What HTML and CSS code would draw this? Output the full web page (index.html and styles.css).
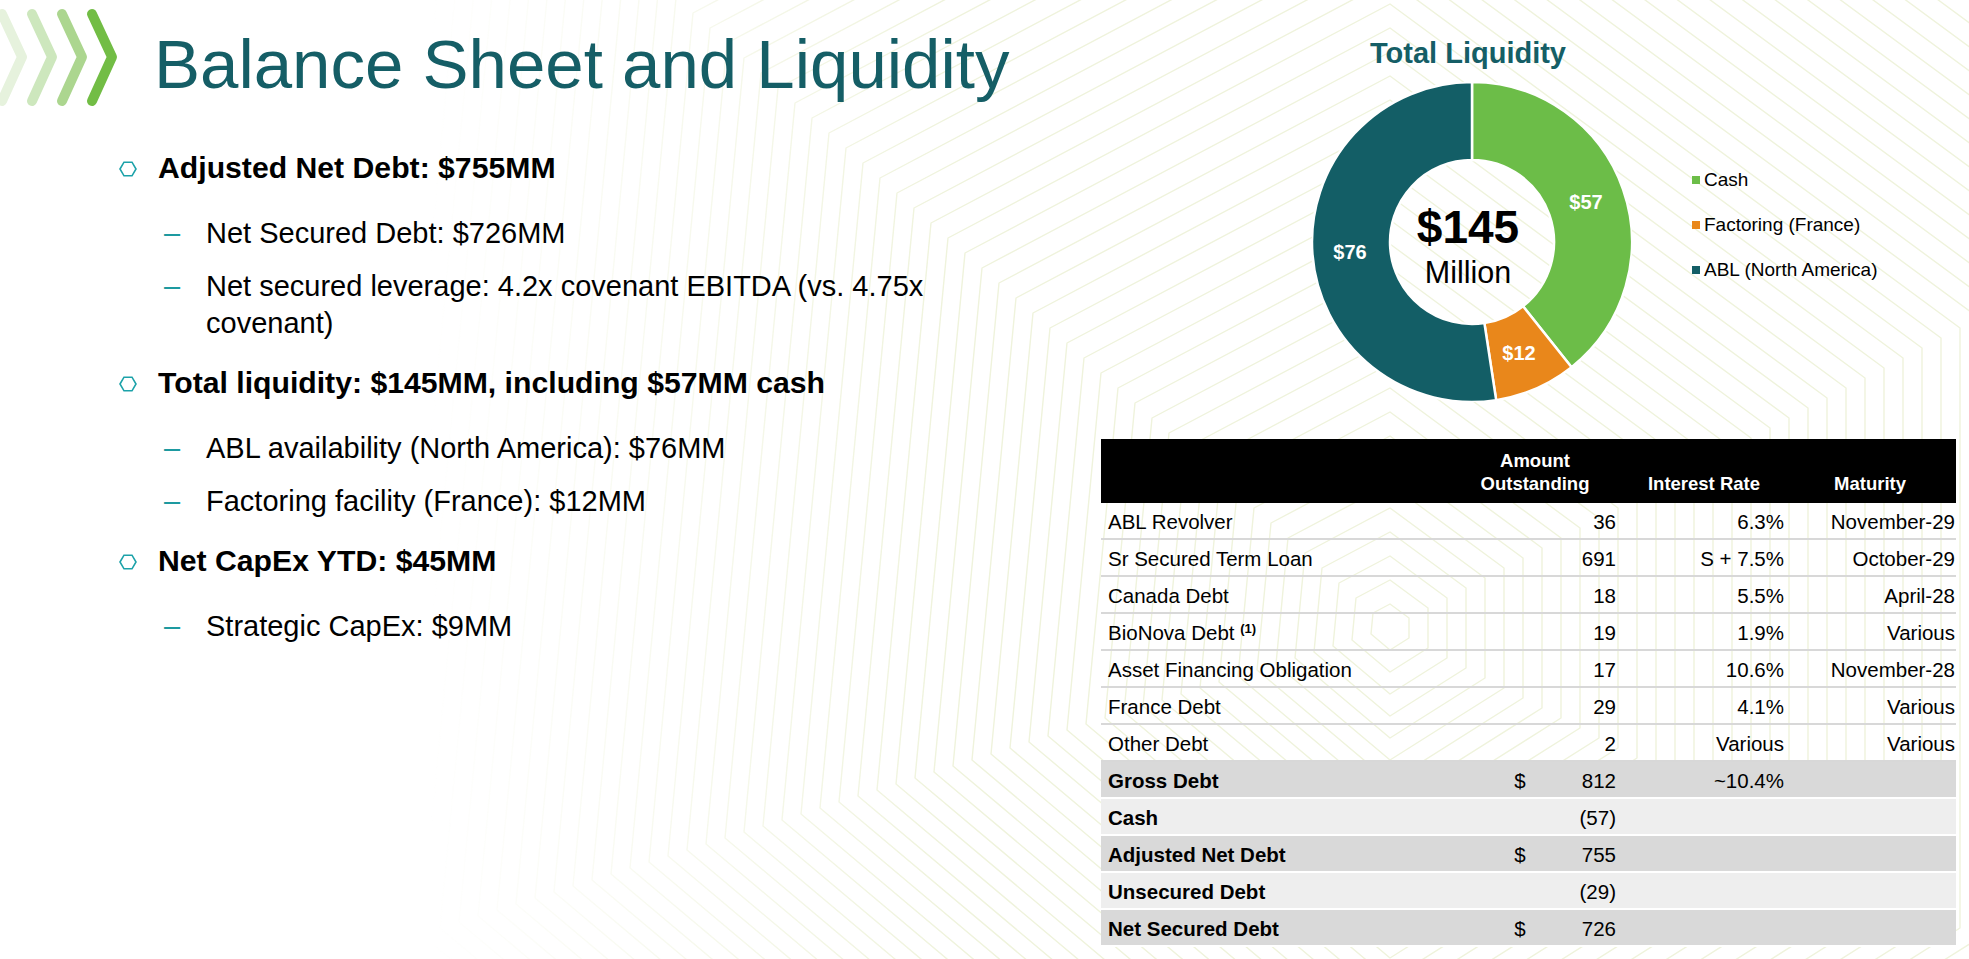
FILE: index.html
```html
<!DOCTYPE html>
<html lang="en">
<head>
<meta charset="utf-8">
<title>Balance Sheet and Liquidity</title>
<link rel="stylesheet" href="styles.css">
</head>
<body>
<div class="slide">
  <svg class="bg" width="1969" height="959" viewBox="0 0 1969 959" aria-hidden="true">
    <defs>
      <path id="hx" d="M0,-1.2 L0.95,-0.5 L0.95,0.5 L0,1.1 L-0.95,0.3 L-0.85,-0.75 Z" vector-effect="non-scaling-stroke"/>
      <linearGradient id="fg" gradientUnits="userSpaceOnUse" x1="430" y1="0" x2="950" y2="0">
        <stop offset="0" stop-color="#000"/>
        <stop offset="1" stop-color="#fff"/>
      </linearGradient>
      <mask id="fade"><rect width="1969" height="959" fill="url(#fg)"/></mask>
    </defs>
    <g mask="url(#fade)">
      <g class="rings" transform="translate(1390 628)">
        <use href="#hx" transform="scale(20)"/>
        <use href="#hx" transform="scale(40)"/>
        <use href="#hx" transform="scale(60)"/>
        <use href="#hx" transform="scale(80)"/>
        <use href="#hx" transform="scale(100)"/>
        <use href="#hx" transform="scale(120)"/>
        <use href="#hx" transform="scale(140)"/>
        <use href="#hx" transform="scale(160)"/>
        <use href="#hx" transform="scale(180)"/>
        <use href="#hx" transform="scale(200)"/>
        <use href="#hx" transform="scale(220)"/>
        <use href="#hx" transform="scale(240)"/>
        <use href="#hx" transform="scale(260)"/>
        <use href="#hx" transform="scale(280)"/>
        <use href="#hx" transform="scale(300)"/>
        <use href="#hx" transform="scale(320)"/>
        <use href="#hx" transform="scale(340)"/>
        <use href="#hx" transform="scale(360)"/>
        <use href="#hx" transform="scale(380)"/>
        <use href="#hx" transform="scale(400)"/>
        <use href="#hx" transform="scale(420)"/>
        <use href="#hx" transform="scale(440)"/>
        <use href="#hx" transform="scale(460)"/>
        <use href="#hx" transform="scale(480)"/>
        <use href="#hx" transform="scale(500)"/>
        <use href="#hx" transform="scale(520)"/>
        <use href="#hx" transform="scale(540)"/>
        <use href="#hx" transform="scale(560)"/>
        <use href="#hx" transform="scale(580)"/>
        <use href="#hx" transform="scale(600)"/>
        <use href="#hx" transform="scale(620)"/>
        <use href="#hx" transform="scale(640)"/>
        <use href="#hx" transform="scale(660)"/>
        <use href="#hx" transform="scale(680)"/>
        <use href="#hx" transform="scale(700)"/>
        <use href="#hx" transform="scale(720)"/>
        <use href="#hx" transform="scale(740)"/>
        <use href="#hx" transform="scale(760)"/>
        <use href="#hx" transform="scale(780)"/>
        <use href="#hx" transform="scale(800)"/>
        <use href="#hx" transform="scale(820)"/>
        <use href="#hx" transform="scale(840)"/>
        <use href="#hx" transform="scale(860)"/>
        <use href="#hx" transform="scale(880)"/>
        <use href="#hx" transform="scale(900)"/>
        <use href="#hx" transform="scale(920)"/>
        <use href="#hx" transform="scale(940)"/>
        <use href="#hx" transform="scale(960)"/>
        <use href="#hx" transform="scale(980)"/>
        <use href="#hx" transform="scale(1000)"/>
        <use href="#hx" transform="scale(1020)"/>
        <use href="#hx" transform="scale(1040)"/>
        <use href="#hx" transform="scale(1060)"/>
        <use href="#hx" transform="scale(1080)"/>
        <use href="#hx" transform="scale(1100)"/>
        <use href="#hx" transform="scale(1120)"/>
        <use href="#hx" transform="scale(1140)"/>
      </g>
    </g>
  </svg>

  <div class="content">
    <section class="left">
      <header class="head">
        <svg class="chevrons" viewBox="0 0 125 110" aria-hidden="true">
          <polyline class="chev" points="2,14 22,57 2,101" stroke="#e6f2dd"/>
          <polyline class="chev" points="32,14 52,57 32,101" stroke="#cde7bd"/>
          <polyline class="chev" points="62,14 82,57 62,101" stroke="#acd68f"/>
          <polyline class="chev" points="92,14 112,57 92,101" stroke="#72bd45"/>
        </svg>
        <h1 class="title">Balance Sheet and Liquidity</h1>
      </header>

      <ul class="points">
        <li class="point">
          <div class="point-head">
            <svg class="hex" viewBox="0 0 18 16" aria-hidden="true"><polygon points="1,8 5,1.2 13,1.2 17,8 13,14.8 5,14.8"/></svg>
            <span>Adjusted Net Debt: $755MM</span>
          </div>
          <ul class="subs">
            <li class="sub"><span class="dash">–</span><span class="sub-text">Net Secured Debt: $726MM</span></li>
            <li class="sub"><span class="dash">–</span><span class="sub-text">Net secured leverage: 4.2x covenant EBITDA (vs. 4.75x covenant)</span></li>
          </ul>
        </li>
        <li class="point">
          <div class="point-head">
            <svg class="hex" viewBox="0 0 18 16" aria-hidden="true"><polygon points="1,8 5,1.2 13,1.2 17,8 13,14.8 5,14.8"/></svg>
            <span>Total liquidity: $145MM, including $57MM cash</span>
          </div>
          <ul class="subs">
            <li class="sub"><span class="dash">–</span><span class="sub-text">ABL availability (North America): $76MM</span></li>
            <li class="sub"><span class="dash">–</span><span class="sub-text">Factoring facility (France): $12MM</span></li>
          </ul>
        </li>
        <li class="point">
          <div class="point-head">
            <svg class="hex" viewBox="0 0 18 16" aria-hidden="true"><polygon points="1,8 5,1.2 13,1.2 17,8 13,14.8 5,14.8"/></svg>
            <span>Net CapEx YTD: $45MM</span>
          </div>
          <ul class="subs">
            <li class="sub"><span class="dash">–</span><span class="sub-text">Strategic CapEx: $9MM</span></li>
          </ul>
        </li>
      </ul>
    </section>

    <section class="right">
      <div class="chart-row">
        <div class="chart">
          <h2 class="chart-title">Total Liquidity</h2>
          <svg class="donut" viewBox="0 0 320 320" aria-label="Total liquidity donut chart">
            <path class="seg-cash" d="M160,0 A160,160 0 0 1 259.58,285.23 L211.04,224.18 A82,82 0 0 0 160,78 Z"/>
            <path class="seg-fact" d="M259.58,285.23 A160,160 0 0 1 184.18,318.16 L172.39,241.06 A82,82 0 0 0 211.04,224.18 Z"/>
            <path class="seg-abl" d="M184.18,318.16 A160,160 0 1 1 160,0 L160,78 A82,82 0 1 0 172.39,241.06 Z"/>
            <text class="d-label" x="274" y="127">$57</text>
            <text class="d-label" x="38" y="177">$76</text>
            <text class="d-label" x="207" y="278">$12</text>
            <text class="d-total" x="156" y="161">$145</text>
            <text class="d-unit" x="156" y="201">Million</text>
          </svg>
        </div>
        <ul class="legend">
          <li><span class="swatch sw-cash"></span>Cash</li>
          <li><span class="swatch sw-fact"></span>Factoring (France)</li>
          <li><span class="swatch sw-abl"></span>ABL (North America)</li>
        </ul>
      </div>

      <table class="debt">
        <colgroup>
          <col class="c-name"><col class="c-cur"><col class="c-amt"><col class="c-rate"><col class="c-mat">
        </colgroup>
        <thead>
          <tr>
            <th></th>
            <th colspan="2" class="h-amt">Amount<br>Outstanding</th>
            <th class="h-rate">Interest Rate</th>
            <th class="h-mat">Maturity</th>
          </tr>
        </thead>
        <tbody>
          <tr><td class="name">ABL Revolver</td><td></td><td class="num">36</td><td class="num">6.3%</td><td class="num mat">November-29</td></tr>
          <tr><td class="name">Sr Secured Term Loan</td><td></td><td class="num">691</td><td class="num">S + 7.5%</td><td class="num mat">October-29</td></tr>
          <tr><td class="name">Canada Debt</td><td></td><td class="num">18</td><td class="num">5.5%</td><td class="num mat">April-28</td></tr>
          <tr><td class="name">BioNova Debt <sup class="fn">(1)</sup></td><td></td><td class="num">19</td><td class="num">1.9%</td><td class="num mat">Various</td></tr>
          <tr><td class="name">Asset Financing Obligation</td><td></td><td class="num">17</td><td class="num">10.6%</td><td class="num mat">November-28</td></tr>
          <tr><td class="name">France Debt</td><td></td><td class="num">29</td><td class="num">4.1%</td><td class="num mat">Various</td></tr>
          <tr><td class="name">Other Debt</td><td></td><td class="num">2</td><td class="num">Various</td><td class="num mat">Various</td></tr>
          <tr class="band dark"><td class="name strong">Gross Debt</td><td class="cur">$</td><td class="num">812</td><td class="num">~10.4%</td><td></td></tr>
          <tr class="band light"><td class="name strong">Cash</td><td></td><td class="num">(57)</td><td></td><td></td></tr>
          <tr class="band dark"><td class="name strong">Adjusted Net Debt</td><td class="cur">$</td><td class="num">755</td><td></td><td></td></tr>
          <tr class="band light"><td class="name strong">Unsecured Debt</td><td></td><td class="num">(29)</td><td></td><td></td></tr>
          <tr class="band dark"><td class="name strong">Net Secured Debt</td><td class="cur">$</td><td class="num">726</td><td></td><td></td></tr>
        </tbody>
      </table>
    </section>
  </div>
</div>
</body>
</html>
```

FILE: styles.css
```css
* { box-sizing: border-box; }

html, body {
  margin: 0;
  padding: 0;
  background: #ffffff;
}

body {
  font-family: "Liberation Sans", Arial, sans-serif;
  color: #000000;
}

.slide {
  position: relative;
  width: 1969px;
  height: 959px;
  overflow: hidden;
  background: #ffffff;
}

/* decorative background contour pattern */
.bg {
  position: absolute;
  left: 0;
  top: 0;
  z-index: 0;
}

.rings {
  fill: none;
  stroke: #eff3dc;
  stroke-width: 1.4;
  stroke-linejoin: round;
}

.content {
  position: relative;
  z-index: 1;
  display: flex;
  height: 100%;
}

/* ---------- left column ---------- */
.left {
  flex: 0 0 1090px;
  min-width: 0;
  padding-right: 90px;
}

.head {
  display: flex;
  align-items: flex-start;
}

.chevrons {
  display: block;
  flex: none;
  width: 125px;
  height: 110px;
}

.chev {
  fill: none;
  stroke-width: 10;
  stroke-linecap: round;
  stroke-linejoin: round;
}

.title {
  margin: 30px 0 0 29px;
  font-size: 69px;
  line-height: 69px;
  font-weight: 400;
  color: #155e66;
  white-space: nowrap;
}

.points {
  list-style: none;
  margin: 39px 0 0 119px;
  padding: 0;
}

.point + .point {
  margin-top: 22px;
}

.point-head {
  display: flex;
  align-items: center;
  font-size: 30.2px;
  line-height: 37px;
  font-weight: 700;
}

.hex {
  flex: none;
  width: 18px;
  height: 16px;
  margin: 3px 21px 0 0;
  fill: none;
  stroke: #1ca2a9;
  stroke-width: 1.6;
}

.subs {
  list-style: none;
  margin: 29px 0 0 45px;
  padding: 0;
}

.sub {
  display: flex;
  font-size: 29px;
  line-height: 37px;
}

.sub + .sub {
  margin-top: 16px;
}

.dash {
  flex: 0 0 42px;
  color: #1d9aa0;
}

/* ---------- right column ---------- */
.right {
  flex: 1 1 auto;
  min-width: 0;
}

.chart-row {
  display: flex;
  align-items: flex-start;
}

.chart {
  flex: none;
  margin-left: 222px;
  width: 320px;
}

.chart-title {
  margin: 35px 0 0;
  padding-right: 8px;
  text-align: center;
  font-size: 29px;
  line-height: 36px;
  font-weight: 700;
  color: #155e66;
  white-space: nowrap;
}

.donut {
  display: block;
  margin-top: 11px;
  width: 320px;
  height: 320px;
}

.seg-cash { fill: #6cbd48; stroke: #ffffff; stroke-width: 2.5; }
.seg-fact { fill: #e9871b; stroke: #ffffff; stroke-width: 2.5; }
.seg-abl  { fill: #135e66; stroke: #ffffff; stroke-width: 2.5; }

.d-label {
  font-family: "Liberation Sans", Arial, sans-serif;
  font-size: 20px;
  font-weight: 700;
  fill: #ffffff;
  text-anchor: middle;
}

.d-total {
  font-family: "Liberation Sans", Arial, sans-serif;
  font-size: 46px;
  font-weight: 700;
  fill: #000000;
  text-anchor: middle;
}

.d-unit {
  font-family: "Liberation Sans", Arial, sans-serif;
  font-size: 30.5px;
  font-weight: 400;
  fill: #000000;
  text-anchor: middle;
}

.legend {
  list-style: none;
  margin: 157px 0 0 60px;
  padding: 0;
  font-size: 19px;
  line-height: 45px;
}

.legend li {
  display: flex;
  align-items: center;
  white-space: nowrap;
}

.swatch {
  flex: none;
  width: 8px;
  height: 8px;
  margin-right: 4px;
}

.sw-cash { background: #6cbd48; }
.sw-fact { background: #e9871b; }
.sw-abl  { background: #135e66; }

/* ---------- debt table ---------- */
.debt {
  margin: 37px 0 0 11px;
  width: 855px;
  border-collapse: separate;
  border-spacing: 0;
  table-layout: fixed;
  font-size: 20.5px;
}

.c-name { width: 379px; }
.c-cur  { width: 80px; }
.c-amt  { width: 60px; }
.c-rate { width: 168px; }
.c-mat  { width: 168px; }

.debt th {
  background: #000000;
  color: #ffffff;
  font-size: 18.5px;
  line-height: 23px;
  font-weight: 700;
  padding: 10px 0 8px;
  vertical-align: bottom;
  text-align: center;
}

.debt .h-amt { padding-right: 30px; }
.debt .h-mat { padding-right: 4px; }

.debt td {
  padding: 3px 0 0;
  line-height: 32px;
  border-bottom: 2px solid #d8d8d8;
  white-space: nowrap;
  vertical-align: middle;
}

.debt .name {
  padding-left: 7px;
  text-align: left;
}

.debt .num {
  text-align: right;
  padding-right: 4px;
}

.debt .mat {
  padding-right: 1px;
}

.debt .cur {
  text-align: center;
}

.debt .strong {
  font-weight: 700;
}

.band td {
  border-bottom: 2px solid #ffffff;
}

.band.dark td { background: #d9d9d9; }
.band.light td { background: #eeeeee; }

.fn {
  font-size: 13px;
  font-weight: 700;
  line-height: 0;
  vertical-align: 7px;
}
```
